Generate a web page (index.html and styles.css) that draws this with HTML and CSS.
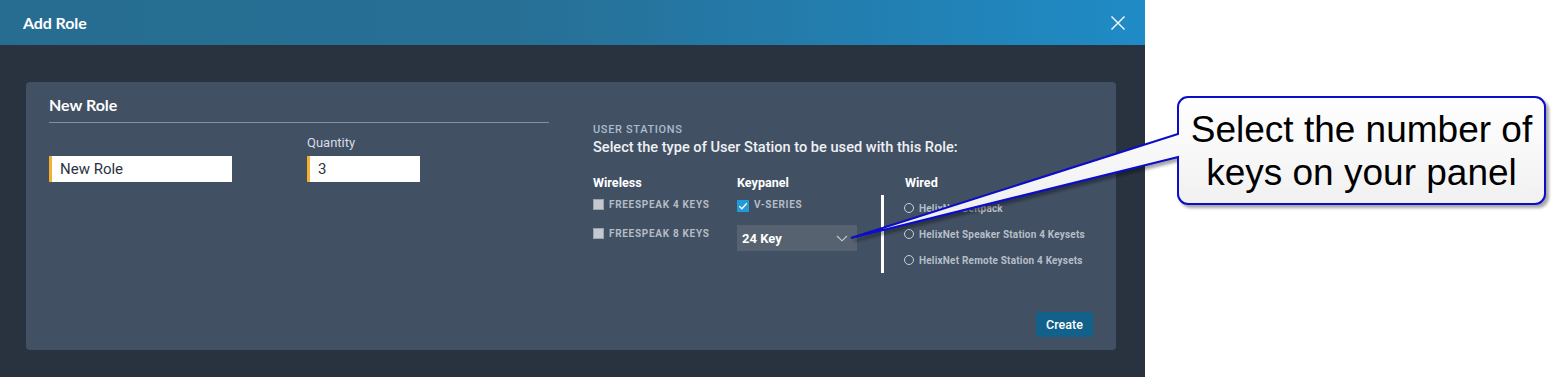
FILE: index.html
```html
<!DOCTYPE html>
<html lang="en">
<head>
<meta charset="utf-8">
<title>Add Role</title>
<link rel="stylesheet" href="styles.css">
</head>
<body>
<div class="page">
  <div class="dialog">
    <header class="dlg-head">
      <h1 class="dlg-title">Add Role</h1>
      <button class="close" aria-label="Close">
        <svg width="16" height="16" viewBox="0 0 16 16"><path d="M1.5 1.5 L14.5 14.5 M14.5 1.5 L1.5 14.5" stroke="#ffffff" stroke-width="1.4" fill="none"/></svg>
      </button>
    </header>
    <div class="dlg-body">
      <section class="panel">
        <div class="panel-main">
          <div class="role-col">
            <h2 class="role-title">New Role</h2>
            <div class="fields">
              <div class="field field-name">
                <div class="label">&nbsp;</div>
                <div class="input">New Role</div>
              </div>
              <div class="field field-qty">
                <div class="label">Quantity</div>
                <div class="input">3</div>
              </div>
            </div>
          </div>
          <div class="stations">
            <div class="eyebrow">USER STATIONS</div>
            <div class="prompt">Select the type of User Station to be used with this Role:</div>
            <div class="types">
              <div class="type type-wireless">
                <div class="type-head">Wireless</div>
                <div class="check-list">
                  <div class="check-row"><span class="box"></span><span class="check-label">FREESPEAK 4 KEYS</span></div>
                  <div class="check-row"><span class="box"></span><span class="check-label">FREESPEAK 8 KEYS</span></div>
                </div>
              </div>
              <div class="type type-keypanel">
                <div class="type-head">Keypanel</div>
                <div class="check-list">
                  <div class="check-row"><span class="box box-on"><svg width="12" height="12" viewBox="0 0 12 12"><path d="M2.3 6.2 L4.9 8.8 L9.8 3.2" stroke="#ffffff" stroke-width="1.3" fill="none"/></svg></span><span class="check-label">V-SERIES</span></div>
                </div>
                <div class="select">
                  <span class="select-value">24 Key</span>
                  <svg width="12" height="7" viewBox="0 0 12 7"><path d="M1 1 L6 5.8 L11 1" stroke="#c9d0d6" stroke-width="1.1" fill="none"/></svg>
                </div>
              </div>
              <div class="type type-wired">
                <div class="type-head">Wired</div>
                <div class="radio-list">
                  <div class="radio-row"><span class="radio"></span><span class="radio-label">HelixNet Beltpack</span></div>
                  <div class="radio-row"><span class="radio"></span><span class="radio-label">HelixNet Speaker Station 4 Keysets</span></div>
                  <div class="radio-row"><span class="radio"></span><span class="radio-label">HelixNet Remote Station 4 Keysets</span></div>
                </div>
              </div>
            </div>
          </div>
        </div>
        <div class="panel-foot">
          <button class="create">Create</button>
        </div>
      </section>
    </div>
  </div>
  <div class="callout">
    <svg class="callout-shape" width="1558" height="377" viewBox="0 0 1558 377">
      <defs>
        <linearGradient id="cg" x1="0" y1="0" x2="0" y2="1">
          <stop offset="0" stop-color="#ffffff"/>
          <stop offset="1" stop-color="#ececec"/>
        </linearGradient>
        <filter id="sh" x="-5%" y="-20%" width="115%" height="150%">
          <feDropShadow dx="3" dy="3" stdDeviation="1.6" flood-color="#000000" flood-opacity="0.35"/>
        </filter>
      </defs>
      <path d="M1188 97 H1535 A10 10 0 0 1 1545 107 V194 A10 10 0 0 1 1535 204 H1188 A10 10 0 0 1 1178 194 V157 L851 238 L1178 134 V107 A10 10 0 0 1 1188 97 Z" fill="url(#cg)" stroke="#0a0ac8" stroke-width="2" stroke-linejoin="miter" filter="url(#sh)"/>
    </svg>
    <div class="callout-text">Select the number of<br>keys on your panel</div>
  </div>
</div>
</body>
</html>
```
FILE: styles.css
```css
* { box-sizing: border-box; }
html, body { margin: 0; padding: 0; background: #ffffff; }
body { font-family: Roboto, "Liberation Sans", Arial, sans-serif; }

.page {
  position: relative;
  width: 1558px;
  height: 377px;
  display: flex;
}

.dialog {
  width: 1145px;
  height: 377px;
  background: #29333f;
  display: flex;
  flex-direction: column;
}

.dlg-head {
  height: 45px;
  flex: none;
  background: linear-gradient(90deg, #276d92 0%, #276f95 45%, #1f8bc6 100%);
  display: flex;
  align-items: center;
  justify-content: space-between;
  padding: 0 19px 0 23px;
}
.dlg-title {
  margin: 0;
  font-family: Lato, "Open Sans", sans-serif;
  font-weight: 700;
  font-size: 16px;
  color: #ffffff;
  letter-spacing: -0.1px;
}
.close {
  background: none;
  border: 0;
  padding: 0;
  width: 16px;
  height: 16px;
  display: flex;
  cursor: pointer;
}

.dlg-body {
  flex: 1;
  padding: 37px 29px 27px 26px;
  display: flex;
}

.panel {
  flex: 1;
  background: #425063;
  border-radius: 4px;
  padding: 14px 23px 13px 23px;
  display: flex;
  flex-direction: column;
}
.panel-main {
  flex: 1;
  display: flex;
}

.role-col {
  width: 500px;
  flex: none;
}
.role-title {
  margin: 0;
  font-family: Lato, "Open Sans", sans-serif;
  font-weight: 700;
  font-size: 16px;
  line-height: 18px;
  color: #ffffff;
  padding-bottom: 8px;
  border-bottom: 1px solid #8591a0;
}
.fields {
  display: flex;
  margin-top: 13px;
}
.field-name { width: 258px; }
.label {
  font-size: 13px;
  line-height: 14px;
  color: #d7dde3;
  margin-bottom: 6px;
}
.input {
  height: 26px;
  background: #ffffff;
  border-left: 3px solid #f4b02f;
  font-size: 15px;
  line-height: 26px;
  color: #29333f;
  padding-left: 8px;
}
.field-name .input { width: 183px; }
.field-qty .input { width: 113px; }

.stations {
  margin-left: 44px;
  padding-top: 27px;
}
.eyebrow {
  font-size: 11px;
  line-height: 13px;
  font-weight: 500;
  color: #a9bccc;
  letter-spacing: 0.65px;
}
.prompt {
  margin-top: 3px;
  font-size: 14.6px;
  line-height: 17px;
  font-weight: 500;
  color: #eef1f4;
}
.types {
  display: flex;
  margin-top: 20px;
}
.type-head {
  font-size: 12.6px;
  line-height: 14px;
  font-weight: 700;
  color: #ffffff;
}
.type-wireless, .type-keypanel { width: 144px; }

.check-list {
  margin-top: 7px;
  display: flex;
  flex-direction: column;
  gap: 15px;
}
.check-row {
  height: 14px;
  display: flex;
  align-items: center;
}
.box {
  width: 11px;
  height: 11px;
  background: #c3c9cf;
  border: 1px solid #9aa4ae;
  margin-right: 5px;
  flex: none;
}
.box-on {
  width: 12px;
  height: 12px;
  background: #239ad8;
  border: 0;
  display: flex;
  margin-top: 3px;
}
.check-label {
  font-size: 10px;
  font-weight: 700;
  letter-spacing: 0.7px;
  color: #b4bcc5;
}

.select {
  margin-top: 14px;
  width: 120px;
  height: 26px;
  background: #56626f;
  display: flex;
  align-items: center;
  justify-content: space-between;
  padding: 0 9px 0 5px;
}
.select-value {
  font-size: 13px;
  font-weight: 700;
  color: #ffffff;
}

.type-wired .type-head { padding-left: 24px; }
.radio-list {
  margin-top: 5px;
  border-left: 3px solid #ffffff;
  padding-left: 20px;
}
.radio-row {
  height: 26px;
  display: flex;
  align-items: center;
}
.radio {
  width: 10px;
  height: 10px;
  border: 1.3px solid #c7d0d8;
  border-radius: 50%;
  margin-right: 5px;
  flex: none;
}
.radio-label {
  font-size: 10px;
  font-weight: 700;
  letter-spacing: 0.2px;
  color: #b6bfc8;
}

.panel-foot {
  display: flex;
  justify-content: flex-end;
}
.create {
  width: 57px;
  height: 25px;
  border: 0;
  border-radius: 3px;
  background: #12618b;
  color: #ffffff;
  font-family: Roboto, "Liberation Sans", sans-serif;
  font-size: 12.5px;
  font-weight: 500;
  padding: 0;
}

.callout {
  position: absolute;
  left: 0;
  top: 0;
  width: 1558px;
  height: 377px;
  pointer-events: none;
}
.callout-shape {
  position: absolute;
  left: 0;
  top: 0;
}
.callout-text {
  position: absolute;
  left: 1178px;
  top: 97px;
  width: 367px;
  height: 107px;
  display: flex;
  align-items: center;
  justify-content: center;
  text-align: center;
  font-family: "Liberation Sans", Arial, sans-serif;
  font-size: 37px;
  line-height: 43px;
  color: #000000;
}
```
